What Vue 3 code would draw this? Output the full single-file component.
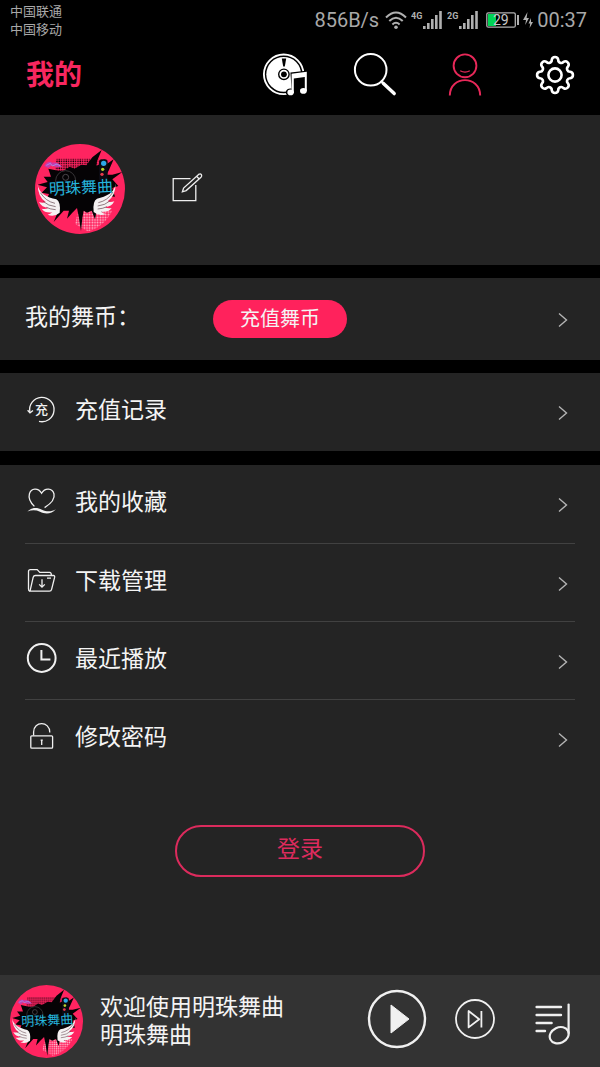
<script setup>
import {ref} from 'vue';

const rechargeItems = [
  {icon: 'recharge', label: '充值记录'},
];

const menuItems = [
  {icon: 'heart', label: '我的收藏'},
  {icon: 'folder', label: '下载管理'},
  {icon: 'clock', label: '最近播放'},
  {icon: 'lock', label: '修改密码'},
];

const groups = [rechargeItems, menuItems];

const playing = ref(false);

// gear outline: 8 round teeth joined by round valleys
const gearPath = () => {
  const c = 24;
  const r = 15.6;
  const point = (deg) => {
    const a = (deg * Math.PI) / 180;
    return `${(c + r * Math.cos(a)).toFixed(2)} ${(c + r * Math.sin(a)).toFixed(2)}`;
  };
  let d = `M${point(-12)}`;
  for (let i = 0; i < 8; i++) {
    d += `A3.3 3.3 0 0 1 ${point(i * 45 + 12)}A3 3 0 0 0 ${point(i * 45 + 33)}`;
  }
  return d + 'Z';
};
</script>

<template>
  <div class="page">
    <svg class="defs" aria-hidden="true">
      <defs>
        <pattern id="dots" width="7" height="7" patternUnits="userSpaceOnUse">
          <circle cx="3" cy="3" r="2.3" fill="#160008"/>
        </pattern>
        <pattern id="light-dots" width="8" height="8" patternUnits="userSpaceOnUse">
          <circle cx="4" cy="4" r="2.6" fill="#ffc3d4"/>
        </pattern>
        <symbol id="cover" viewBox="0 0 270 270">
          <circle cx="135" cy="135" r="135" fill="#ff2460"/>
          <path d="M64 44H190V80H60Z" fill="url(#dots)"/>
          <path d="M130 200H232Q206 250 158 262L120 240Z" fill="url(#light-dots)"/>
          <path
            d="M40 74L70 80L86 80L104 68L118 74L140 62L154 64L172 40L200 18L186 52L184 66L194 60L208 44L210 64L236 46L222 78L214 92L232 92L262 84L232 106L250 126L232 132L240 158L216 156L212 176L194 178L202 208L186 194L180 226L170 200L156 206L146 200L142 222L138 262L132 222L126 192L112 206L96 224L102 200L86 200L56 234L72 196L60 186L54 170L34 168L42 150L20 146L36 130L8 122L38 114L26 98L48 98Z"
            fill="#050305"/>
          <circle cx="92" cy="110" r="30" fill="none" stroke="#383538" stroke-width="3"/>
          <circle cx="92" cy="100" r="9" fill="none" stroke="#4b464b" stroke-width="3"/>
          <path d="M28 66Q38 48 52 56Q66 52 82 68L64 70L50 64L40 72Z" fill="#c43cae"/>
          <path d="M34 64L46 58L52 66L66 60L76 66" fill="none" stroke="#8fb6ff" stroke-width="2"/>
          <rect x="192" y="46" width="26" height="66" rx="8" fill="#0b0a12"/>
          <circle cx="206" cy="58" r="8" fill="#2da8e6"/>
          <circle cx="203" cy="76" r="5" fill="#b9d32c"/>
          <circle cx="201" cy="91" r="5" fill="#e63a4c"/>
          <g id="wing">
            <path d="M8 120C10 148 36 160 64 166Q78 174 74 206Q58 220 38 212Q46 210 52 205Q30 208 20 194Q32 196 40 192Q20 190 12 174Q24 178 32 174Q8 158 8 120Z" fill="#f5f1f2"/>
            <path d="M16 146Q32 172 60 178M24 172Q40 186 62 188M34 190Q46 196 62 197" fill="none" stroke="#5d4048" stroke-width="2"/>
          </g>
          <use href="#wing" transform="translate(250 -2) scale(-1 1)"/>
        </symbol>
      </defs>
    </svg>

    <header>
      <div class="status">
        <div class="carriers">
          <div>中国联通</div>
          <div>中国移动</div>
        </div>
        <div class="indicators">
          <span>856B/s</span>
          <svg class="wifi" width="22" height="20" viewBox="0 0 22 20" fill="none" stroke="#b0b0b0" stroke-width="2">
            <path d="M1 7.5Q11 -2.5 21 7.5M4.3 11Q11 4.5 17.7 11M7.4 14.4Q11 11 14.6 14.4"/>
            <circle cx="11" cy="17.2" r="1.8" fill="#b0b0b0" stroke="none"/>
          </svg>
          <svg v-for="net in ['4G', '2G']" :key="net" class="signal" width="32" height="22" viewBox="0 0 32 22" fill="#b0b0b0">
            <text class="net" x="0" y="10">{{ net }}</text>
            <path d="M12 17h2.6v3H12zM16 14h2.6v6H16zM20 10h2.6v10H20zM24 6h2.6v14H24zM28.2 2H30.8v18h-2.6z"/>
          </svg>
          <svg class="battery" width="33" height="16" viewBox="0 0 33 16">
            <rect x="2" y="2" width="8" height="12" fill="#00d455"/>
            <rect x="0.8" y="0.8" width="28.5" height="14.4" rx="1.5" fill="none" stroke="#b0b0b0" stroke-width="1.3"/>
            <rect x="31" y="3" width="2" height="10" fill="#b0b0b0"/>
            <text class="level" x="7" y="13" fill="#c8c8c8">29</text>
          </svg>
          <svg class="bolt" width="10" height="16" viewBox="0 0 10 16" fill="#b0b0b0">
            <path d="M4.5 0L0 8h3L2.2 13L6 6H3.6ZM8 6L5.5 11.5H7.2L6.6 16L10 10H8Z"/>
          </svg>
          <span>00:37</span>
        </div>
      </div>

      <div class="topbar">
        <h1>我的</h1>
        <nav>
          <a href="#" aria-label="音乐">
            <svg width="48" height="48" viewBox="0 0 48 48">
              <circle cx="22.7" cy="23.3" r="19.8" fill="none" stroke="#fff" stroke-width="1.9"/>
              <circle cx="22.7" cy="23.3" r="17.4" fill="#fff"/>
              <path d="M20.8 7.5h4.4l-1.4 8h-1.6z"/>
              <circle cx="22.9" cy="23.3" r="5.2" fill="none" stroke="#000" stroke-width="1.4"/>
              <circle cx="22.9" cy="23.3" r="2.9"/>
              <path d="M29.4 21.6L47 19.4V42L37 46L30.6 38Z"/>
              <ellipse cx="29.4" cy="41.4" rx="4.6" ry="4"/>
              <g fill="#fff">
                <path d="M30.6 22.8L45.8 20.8V40H43.8V26L32.8 27.4V42H30.6Z"/>
                <ellipse cx="29.6" cy="41.4" rx="3.2" ry="2.8"/>
                <ellipse cx="42.4" cy="39.9" rx="3.4" ry="2.8"/>
              </g>
            </svg>
          </a>
          <a href="#" aria-label="搜索">
            <svg width="48" height="48" viewBox="0 0 48 48" fill="none" stroke="#fff" stroke-linecap="round">
              <circle cx="19.7" cy="18.8" r="15.8" stroke-width="2"/>
              <path d="M30.4 30.4L32 32" stroke-width="2"/>
              <path d="M32.2 32.2L43.2 42.6" stroke-width="3.4"/>
            </svg>
          </a>
          <a href="#" aria-label="我的">
            <svg width="48" height="48" viewBox="0 0 48 48" fill="none" stroke="#e82859" stroke-width="1.9">
              <circle cx="24" cy="14.8" r="11.4"/>
              <path d="M19.2 19.8Q24 22.4 28.8 19.8" stroke-width="1.2"/>
              <path d="M8.8 44.4C9 24 39 24 39.2 44.4"/>
            </svg>
          </a>
          <a href="#" aria-label="设置">
            <svg width="48" height="48" viewBox="0 0 48 48" fill="none" stroke="#fff" stroke-width="2.6">
              <path :d="gearPath()"/>
              <circle cx="24" cy="24" r="6.6"/>
            </svg>
          </a>
        </nav>
      </div>
    </header>

    <section class="profile">
      <svg class="avatar" viewBox="0 0 270 270">
        <use href="#cover"/>
        <text class="cover-text" x="42" y="148" transform="rotate(-3 135 135)">明珠舞曲</text>
      </svg>
      <button class="edit" type="button" aria-label="编辑资料">
        <svg width="36" height="36" viewBox="0 0 36 36" fill="none" stroke="#eee" stroke-width="1.3">
          <path d="M21.5 7.6H4.2V29.6H26.8V14"/>
          <path d="M13.4 20.8L14.6 17L29.6 3.4Q31.4 2.2 32.4 3.6Q33.2 5 32 6.2L17.2 19.6ZM27.6 5.2L30.2 8"/>
        </svg>
      </button>
    </section>

    <section class="coins">
      <span class="label">我的舞币：</span>
      <button class="recharge" type="button">充值舞币</button>
      <svg class="chevron" width="12" height="18" viewBox="0 0 12 18"><path d="M2 3.5L9.5 10L2 16.5"/></svg>
    </section>

    <main>
      <ul v-for="(group, index) in groups" :key="index" class="menu">
        <li v-for="item in group" :key="item.label">
          <a href="#">
            <svg class="icon" width="32" height="32" viewBox="0 0 32 32">
              <template v-if="item.icon === 'recharge'">
                <path d="M14 28.4A12.2 12.2 0 1 0 4.9 19"/>
                <path d="M2.6 17.2L5 19.8L8 17.4"/>
                <text class="glyph" x="10" y="21">充</text>
              </template>
              <template v-else-if="item.icon === 'heart'">
                <path d="M9.4 21.4C5 17 3.4 12.4 4.4 8.8C6 3 13.2 2.4 16.6 8.3C20 2.4 27.4 3 29 9C30 13.4 26 18.6 19.6 22.6"/>
                <path class="solid" d="M2.4 26.6C7 22.2 12 22.4 17 24.8C22 27 26.6 26.8 30.8 24.2C26.4 29.4 20 29.2 15 26.8C11 25 7 24.8 2.4 26.6Z"/>
              </template>
              <template v-else-if="item.icon === 'folder'">
                <path d="M5 27.2Q3.4 27 3.5 25V7.5Q3.5 5.6 5.4 5.6H12.2L14.8 8.4H24.6Q26.4 8.4 26.4 11.4"/>
                <path d="M5 27.2L8.2 13.2Q8.7 11.5 10.4 11.5H28.4Q30 11.6 29.6 13.4L26.6 25.4Q26.2 27.2 24.4 27.2Z"/>
                <path d="M17 15.2V23M14.2 20.4L17 23.2L19.8 20.4M22 14.2H26"/>
              </template>
              <template v-else-if="item.icon === 'clock'">
                <circle class="thick" cx="16.7" cy="16" r="13.9"/>
                <path class="thick" d="M16.4 8V17.4H25.4"/>
              </template>
              <template v-else>
                <rect x="5.8" y="15.8" width="21.8" height="12.4" rx="1"/>
                <path d="M8.6 15.6V12C8.6 0.8 24.8 0.8 24.8 12.4"/>
                <path d="M16.7 20V25M15.6 20.2H17.8"/>
              </template>
            </svg>
            <span class="label">{{ item.label }}</span>
            <svg class="chevron" width="12" height="18" viewBox="0 0 12 18"><path d="M2 3.5L9.5 10L2 16.5"/></svg>
          </a>
        </li>
      </ul>
      <div class="login-area">
        <button class="login" type="button">登录</button>
      </div>
    </main>

    <footer class="player">
      <svg class="disc" viewBox="0 0 270 270">
        <use href="#cover"/>
        <text class="cover-text" x="42" y="148" transform="rotate(-3 135 135)">明珠舞曲</text>
      </svg>
      <div class="track">
        <div>欢迎使用明珠舞曲</div>
        <div>明珠舞曲</div>
      </div>
      <div class="controls">
        <button class="play" type="button" aria-label="播放" @click="playing = !playing">
          <svg width="60" height="60" viewBox="0 0 60 60">
            <circle cx="30" cy="30" r="28" fill="none" stroke="#f0f0f0" stroke-width="2.4"/>
            <path v-if="playing" d="M21 16H27V44H21ZM33 16H39V44H33Z" fill="#f0f0f0"/>
            <path v-else d="M24 16V44L42 30Z" fill="#f0f0f0" stroke="#f0f0f0" stroke-linejoin="round"/>
          </svg>
        </button>
        <button class="next" type="button" aria-label="下一首">
          <svg width="42" height="42" viewBox="0 0 42 42" fill="none" stroke="#f0f0f0" stroke-width="1.8">
            <circle cx="21" cy="21" r="19"/>
            <path d="M14.6 13V29.4L25.2 21.2ZM27.4 13V29.6" stroke-linejoin="round"/>
          </svg>
        </button>
        <button class="queue" type="button" aria-label="播放列表">
          <svg width="40" height="52" viewBox="0 0 40 52" fill="none" stroke="#f0f0f0" stroke-width="2.4" stroke-linecap="round">
            <path d="M3.6 14H28M3.6 22H28M3.6 30H18.6M3.6 38H12"/>
            <path d="M35.6 11.6V40" stroke-width="2.2"/>
            <ellipse cx="26.2" cy="42.2" rx="9.8" ry="7.8" transform="rotate(-25 26.2 42.2)" stroke-width="2.2"/>
          </svg>
        </button>
      </div>
    </footer>
  </div>
</template>

<style>
body {
  margin: 0;
  background: #000;
}
</style>

<style scoped>
.page {
  display: flex;
  flex-direction: column;
  min-height: 100vh;
  background: #000;
  color: #f4f4f4;
  font-family: "Liberation Sans", "Noto Sans CJK SC", sans-serif;
  font-size: 23px;
}

.defs {
  position: absolute;
  width: 0;
  height: 0;
}

svg {
  display: block;
  flex: none;
}

button {
  padding: 0;
  border: 0;
  background: none;
  color: inherit;
  font: inherit;
  cursor: pointer;
}

a {
  color: inherit;
  text-decoration: none;
}

.status {
  display: flex;
  justify-content: space-between;
  align-items: center;
  height: 40px;
  padding: 0 13px 0 10px;
  color: #a8a8a8;
}

.carriers {
  padding-top: 2px;
  font-size: 13px;
  line-height: 18px;
}

.indicators {
  display: flex;
  align-items: center;
  gap: 4px;
  font-family: Roboto, sans-serif;
  font-size: 20px;
  line-height: 40px;
}

.net {
  font: 700 9px Roboto, sans-serif;
}

.level {
  font: 14px Roboto, sans-serif;
}

.wifi {
  margin-left: 2px;
}

.battery {
  margin-left: 3px;
}

.topbar {
  display: flex;
  justify-content: space-between;
  align-items: center;
  height: 70px;
  padding: 0 0 5px 26px;
}

h1 {
  margin: 0;
  padding-top: 2px;
  color: #f8275f;
  font-size: 28px;
  font-weight: 700;
  line-height: 40px;
}

nav {
  display: flex;
}

nav a {
  display: flex;
  justify-content: center;
  width: 90px;
}

.profile {
  display: flex;
  align-items: center;
  gap: 44px;
  padding: 29px 35px 31px;
  background: #242424;
}

.avatar {
  width: 90px;
  height: 90px;
}

.cover-text {
  fill: #25b4dc;
  font: 400 48px "Noto Sans CJK SC", sans-serif;
}

.coins {
  display: flex;
  align-items: center;
  height: 82px;
  margin: 13px 0;
  padding: 0 31px 0 25px;
  background: #242424;
}

.coins .label {
  width: 188px;
}

.label {
  line-height: 34px;
  padding-bottom: 4px;
}

.recharge {
  width: 134px;
  height: 38px;
  border-radius: 19px;
  background: #ff225c;
  font-size: 20px;
  line-height: 34px;
}

.chevron {
  margin-left: auto;
  fill: none;
  stroke: #b4b4b4;
  stroke-width: 1.4;
}

main {
  display: flex;
  flex-direction: column;
  flex: 1;
}

.menu {
  margin: 0;
  padding: 0 25px;
  background: #242424;
  list-style: none;
}

.menu + .menu {
  margin-top: 14px;
}

.menu li {
  box-sizing: border-box;
  height: 78px;
}

.menu li + li {
  border-top: 1px solid #414141;
}

.menu a {
  display: flex;
  align-items: center;
  height: 100%;
  padding-right: 6px;
}

.icon {
  margin-right: 18px;
  padding-bottom: 6px;
  fill: none;
  stroke: #f0f0f0;
  stroke-width: 1.3;
}

.thick {
  stroke-width: 2;
}

.solid {
  fill: #f0f0f0;
  stroke: none;
}

.glyph {
  fill: #f0f0f0;
  stroke: none;
  font: 500 13px "Noto Sans CJK SC", sans-serif;
}

.login-area {
  flex: 1;
  padding: 48px 25px;
  background: #242424;
  text-align: center;
}

.login {
  width: 250px;
  height: 52px;
  padding-bottom: 4px;
  border: 2px solid #dc2b5d;
  border-radius: 26px;
  color: #dc2b5d;
  line-height: 34px;
}

.player {
  display: flex;
  align-items: center;
  height: 92px;
  padding: 0 17px 0 10px;
  background: #333;
}

.disc {
  width: 73px;
  height: 73px;
}

.track {
  flex: 1;
  margin-left: 17px;
  line-height: 28px;
  white-space: nowrap;
}

.controls {
  display: flex;
  align-items: center;
  padding-bottom: 5px;
}

.controls button {
  display: flex;
  justify-content: center;
  width: 60px;
}

.controls .next {
  width: 96px;
}
</style>
